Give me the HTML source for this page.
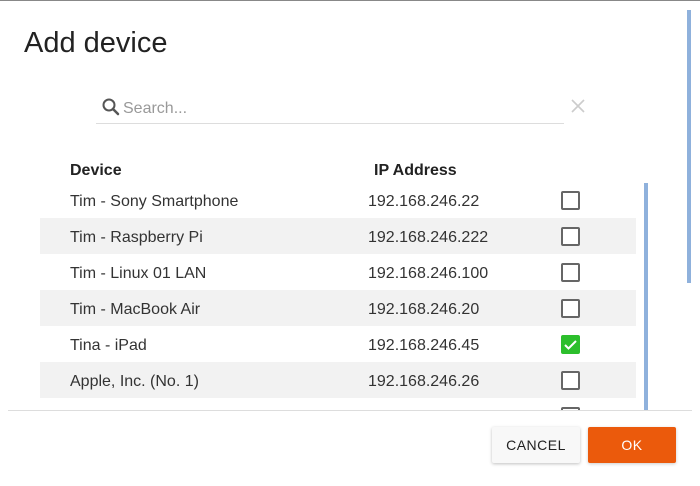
<!DOCTYPE html>
<html><head><style>
body{margin:0;width:700px;height:486px;background:#fff;font-family:"Liberation Sans",sans-serif;position:relative;overflow:hidden;color:#222}
.top{position:absolute;left:0;top:0;width:700px;height:1px;background:#888}
h1{position:absolute;left:24px;top:27px;margin:0;font-weight:400;font-size:29px;color:#222}
.search{position:absolute;left:96px;top:93px;width:468px;height:30px;border-bottom:1px solid #ddd}
.search span{position:absolute;left:27px;top:7px;font-size:16px;color:#999}
.x{position:absolute;left:570px;top:98px;}
.hd{position:absolute;top:162px;font-weight:700;font-size:16px;color:#222}
.row{position:absolute;left:40px;width:596px;height:36px;font-size:16px;color:#333}
.row.g{background:#f2f2f2}
.row .n{position:absolute;left:30px;top:11px}
.row .ip{position:absolute;left:328px;top:11px}
.cb{position:absolute;left:521px;top:9px;width:15px;height:15px;border:2px solid #666;border-radius:2px;background:#fff}
.cb.on{background:#2cbf2c;border-color:#2cbf2c}
.sb1{position:absolute;left:687px;top:10px;width:4px;height:273px;background:#8fb1dc}
.sb2{position:absolute;left:644px;top:183px;width:4px;height:227px;background:#8fb1dc}
.clip{position:absolute;left:0;top:182px;width:700px;height:228px;overflow:hidden}
.foot{position:absolute;left:8px;top:410px;width:684px;height:1px;background:#ddd}
.btn{position:absolute;top:427px;width:88px;height:36px;border-radius:2px;font-size:14px;letter-spacing:.5px;text-align:center;line-height:36px}
.c{left:492px;background:#f8f8f8;color:#222;box-shadow:0 1px 3px rgba(0,0,0,.25)}
.o{left:588px;background:#eb5a0c;color:#fff;box-shadow:0 1px 3px rgba(0,0,0,.2)}
</style></head><body>
<div class="top"></div>
<h1>Add device</h1>
<div class="search">
<svg style="position:absolute;left:5px;top:4px" width="20" height="20" viewBox="0 0 20 20"><circle cx="8" cy="8" r="5.5" fill="none" stroke="#555" stroke-width="2"/><path d="M12 12l5 5" stroke="#555" stroke-width="2.5" stroke-linecap="round"/></svg>
<span>Search...</span></div>
<svg class="x" width="16" height="16" viewBox="0 0 16 16"><path d="M2 2l12 12M14 2L2 14" stroke="#ccc" stroke-width="1.6"/></svg>
<div class="hd" style="left:70px">Device</div>
<div class="hd" style="left:374px">IP Address</div>
<div class="clip">
<div class="row" style="top:0"><span class="n">Tim - Sony Smartphone</span><span class="ip">192.168.246.22</span><div class="cb"></div></div>
<div class="row g" style="top:36px"><span class="n">Tim - Raspberry Pi</span><span class="ip">192.168.246.222</span><div class="cb"></div></div>
<div class="row" style="top:72px"><span class="n">Tim - Linux 01 LAN</span><span class="ip">192.168.246.100</span><div class="cb"></div></div>
<div class="row g" style="top:108px"><span class="n">Tim - MacBook Air</span><span class="ip">192.168.246.20</span><div class="cb"></div></div>
<div class="row" style="top:144px"><span class="n">Tina - iPad</span><span class="ip">192.168.246.45</span><div class="cb on"><svg width="15" height="15" viewBox="0 0 15 15" style="position:absolute;left:0;top:0"><path d="M2 8l3.5 3.5L13 4" stroke="#fff" stroke-width="2" fill="none"/></svg></div></div>
<div class="row g" style="top:180px"><span class="n">Apple, Inc. (No. 1)</span><span class="ip">192.168.246.26</span><div class="cb"></div></div>
<div class="row" style="top:216px"><div class="cb"></div></div>
</div>
<div class="sb1"></div>
<div class="sb2"></div>
<div class="foot"></div>
<div class="btn c">CANCEL</div>
<div class="btn o">OK</div>
</body></html>
